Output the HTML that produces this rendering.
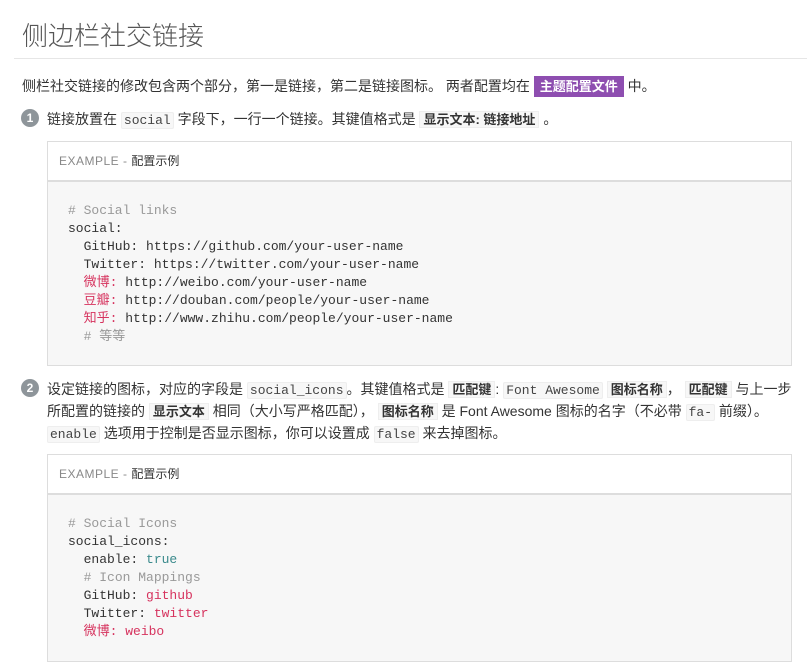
<!DOCTYPE html>
<html><head><meta charset="utf-8"><style>
body{margin:0;width:807px;height:669px;overflow:hidden;background:#fff;font-family:"Liberation Sans","Noto Sans CJK SC",sans-serif;color:#333;font-size:14px;position:relative}
.a{position:absolute;white-space:nowrap}
h1{position:absolute;left:22px;top:16px;margin:0;font-weight:300;font-size:26px;color:#555;font-family:"Liberation Sans","Noto Sans CJK SC",sans-serif}
.hr{position:absolute;left:14px;right:0;top:58px;height:1px;background:#e6e6e6}
code{font-family:"Liberation Mono","Noto Sans CJK SC",monospace;font-size:13px;background:#f7f7f7;border:1px solid #eee;border-radius:2px;padding:0 2px;color:#444}
b.k{font-weight:600;background:#f7f7f7;border:1px solid #eee;padding:0 3px;font-size:13px}
.tag{background:#8e4eb0;color:#fff;padding:3px 6px;font-weight:600;font-size:13px}
.num{position:absolute;left:21px;width:18px;height:18px;border-radius:50%;background:#8e959a;color:#fff;font-size:12px;text-align:center;line-height:18px;font-weight:bold}
.box{position:absolute;left:47px;width:743px;border:1px solid #ddd;background:#f7f7f7}
.hd{height:38px;background:#fff;border-bottom:2px solid #ddd;line-height:38px;padding-left:11px;font-size:12px;color:#888;letter-spacing:.5px}
.hd span{color:#333;letter-spacing:0}
pre{margin:0;padding:20px 20px;font-family:"Liberation Mono","Noto Sans CJK SC",monospace;font-size:13px;line-height:18px;color:#333}
.c{color:#999}.r{color:#d6335e}.t{color:#3a8a8c}
</style></head><body>
<h1>侧边栏社交链接</h1>
<div class="hr"></div>
<div class="a" style="left:22px;top:76px">侧栏社交链接的修改包含两个部分，第一是链接，第二是链接图标。 两者配置均在 <span class="tag">主题配置文件</span> 中。</div>
<div class="num" style="top:109px">1</div>
<div class="a" style="left:47px;top:109px">链接放置在 <code>social</code> 字段下，一行一个链接。其键值格式是 <b class="k">显示文本: 链接地址</b> 。</div>
<div class="box" style="top:141px;height:223px">
<div class="hd">EXAMPLE - <span>配置示例</span></div>
<pre><span class="c"># Social links</span>
social:
  GitHub: https://github.com/your-user-name
  Twitter: https://twitter.com/your-user-name
  <span class="r">微博:</span> http://weibo.com/your-user-name
  <span class="r">豆瓣:</span> http://douban.com/people/your-user-name
  <span class="r">知乎:</span> http://www.zhihu.com/people/your-user-name
  <span class="c"># 等等</span></pre>
</div>
<div class="num" style="top:379px">2</div>
<div class="a" style="left:47px;top:379px">设定链接的图标，对应的字段是 <code>social_icons</code>。其键值格式是 <b class="k">匹配键</b>: <code>Font Awesome</code> <b class="k">图标名称</b>， <b class="k">匹配键</b> 与上一步</div>
<div class="a" style="left:47px;top:401px">所配置的链接的 <b class="k">显示文本</b> 相同（大小写严格匹配）， <b class="k">图标名称</b> 是 Font Awesome 图标的名字（不必带 <code>fa-</code> 前缀）。</div>
<div class="a" style="left:47px;top:423px"><code>enable</code> 选项用于控制是否显示图标，你可以设置成 <code>false</code> 来去掉图标。</div>
<div class="box" style="top:454px;height:206px">
<div class="hd">EXAMPLE - <span>配置示例</span></div>
<pre><span class="c"># Social Icons</span>
social_icons:
  enable: <span class="t">true</span>
  <span class="c"># Icon Mappings</span>
  GitHub: <span class="r">github</span>
  Twitter: <span class="r">twitter</span>
  <span class="r">微博: weibo</span></pre>
</div>
</body></html>
